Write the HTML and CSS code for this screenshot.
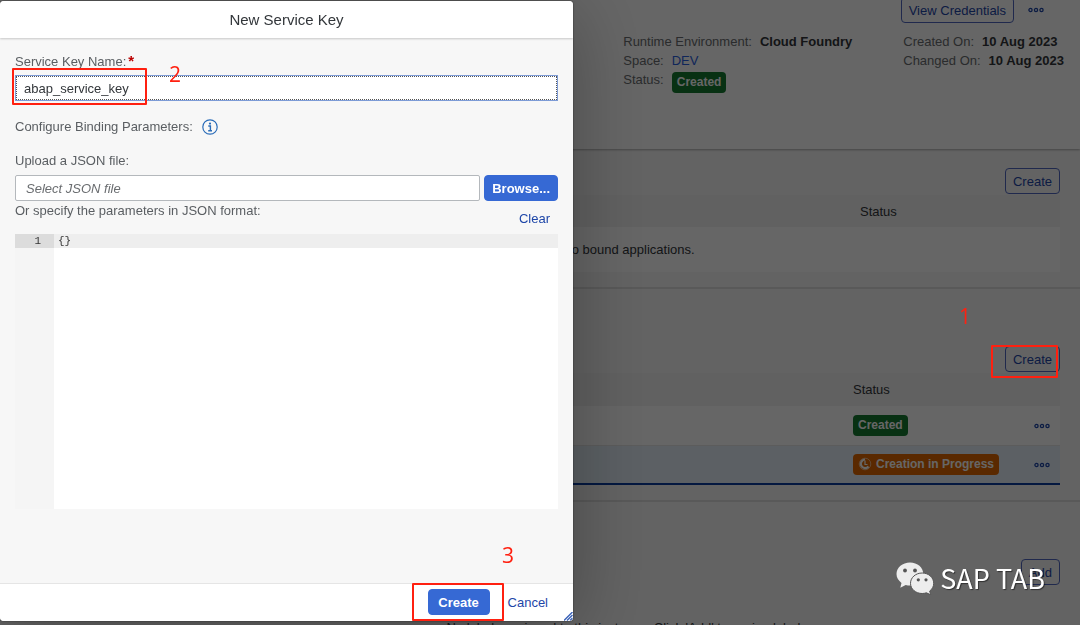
FILE: index.html
```html
<!DOCTYPE html>
<html lang="en">
<head>
  <meta charset="UTF-8" />
  <meta name="viewport" content="width=device-width, initial-scale=1.0"/>
  <title>New Service Key</title>
  <link rel="stylesheet" href="styles.css">
</head>
<body>

  <!-- Instance page -->
  <main class="page">
    <header class="page-header">
      <div class="page-actions">
        <button class="btn">View Credentials</button>
        <button class="more" aria-label="More actions">
          <svg width="16" height="6" viewBox="0 0 16 6"><circle cx="2.5" cy="3" r="1.6"/><circle cx="8" cy="3" r="1.6"/><circle cx="13.5" cy="3" r="1.6"/></svg>
        </button>
      </div>
      <div class="facts">
        <div class="fact-list fact-list-main">
          <div class="fact"><span>Runtime Environment:</span><strong>Cloud Foundry</strong></div>
          <div class="fact"><span>Space:</span><a href="#">DEV</a></div>
          <div class="fact"><span>Status:</span><span class="badge badge-ok">Created</span></div>
        </div>
        <div class="fact-list">
          <div class="fact"><span>Created On:</span><strong>10 Aug 2023</strong></div>
          <div class="fact"><span>Changed On:</span><strong>10 Aug 2023</strong></div>
        </div>
      </div>
    </header>

    <section class="section">
      <div class="toolbar"><button class="btn">Create</button></div>
      <table class="table table-apps">
        <thead>
          <tr><th></th><th class="col-status">Status</th></tr>
        </thead>
        <tbody>
          <tr><td colspan="2" class="empty">No bound applications.</td></tr>
        </tbody>
      </table>
    </section>

    <section class="section">
      <div class="toolbar"><button class="btn">Create</button></div>
      <table class="table table-keys">
        <thead>
          <tr><th></th><th class="col-status">Status</th><th class="col-more"></th></tr>
        </thead>
        <tbody>
          <tr>
            <td></td>
            <td><span class="badge badge-ok">Created</span></td>
            <td>
              <button class="more" aria-label="More actions">
                <svg width="16" height="6" viewBox="0 0 16 6"><circle cx="2.5" cy="3" r="1.6"/><circle cx="8" cy="3" r="1.6"/><circle cx="13.5" cy="3" r="1.6"/></svg>
              </button>
            </td>
          </tr>
          <tr class="selected">
            <td></td>
            <td>
              <span class="badge badge-busy">
                <svg width="14" height="14" viewBox="0 0 14 14"><circle cx="7" cy="7" r="5.8" fill="none" stroke="#fff" stroke-opacity=".5"/><path d="M7 2.500A4.300 4.300 0 1 0 10.500 9.500" fill="none" stroke="#fff" stroke-width="2.200"/><path d="M7 3.500V7.500H9.500" fill="none" stroke="#fff" stroke-width="1.200"/></svg>
                Creation in Progress
              </span>
            </td>
            <td>
              <button class="more" aria-label="More actions">
                <svg width="16" height="6" viewBox="0 0 16 6"><circle cx="2.5" cy="3" r="1.6"/><circle cx="8" cy="3" r="1.6"/><circle cx="13.5" cy="3" r="1.6"/></svg>
              </button>
            </td>
          </tr>
        </tbody>
      </table>
    </section>

    <section class="section section-labels">
      <div class="toolbar"><button class="btn">Add</button></div>
      <p class="empty">No labels assigned to this instance. Click 'Add' to assign labels.</p>
    </section>
  </main>

  <div class="overlay"></div>

  <!-- Dialog -->
  <form class="dialog" role="dialog" aria-labelledby="dialog-title">
    <h1 class="dialog-title" id="dialog-title">New Service Key</h1>

    <div class="dialog-body">
      <label for="key-name">Service Key Name:<span class="required">*</span></label>
      <div class="focus-box">
        <input class="input" id="key-name" type="text" value="abap_service_key">
      </div>

      <div class="binding">
        <span>Configure Binding Parameters:</span>
        <svg width="16" height="16" viewBox="0 0 16 16"><circle cx="8" cy="8" r="7.2" fill="none" stroke="#2a6cb8" stroke-width="1.2"/><circle cx="8" cy="4.6" r="1.1" fill="#2a6cb8"/><path d="M6.3 7H8.4V11.5M6.2 11.7H10" fill="none" stroke="#2a6cb8" stroke-width="1.4"/></svg>
      </div>

      <label for="json-file">Upload a JSON file:</label>
      <div class="upload">
        <input class="input" id="json-file" type="text" placeholder="Select JSON file">
        <button type="button" class="btn btn-primary">Browse...</button>
      </div>

      <div class="params">
        <label for="json-text">Or specify the parameters in JSON format:</label>
        <button type="button" class="btn btn-text">Clear</button>
      </div>
      <div class="editor">
        <div class="gutter"><span>1</span></div>
        <textarea id="json-text" spellcheck="false">{}</textarea>
      </div>
    </div>

    <footer class="dialog-footer">
      <button type="button" class="btn btn-primary">Create</button>
      <button type="button" class="btn btn-text">Cancel</button>
    </footer>
    <svg class="resize" width="9" height="9" viewBox="0 0 9 9"><path d="M0 8.5L8.5 0M3 8.5L8.5 3M6 8.5L8.5 6" stroke="#3a62b8" stroke-width="1.4"/></svg>
  </form>

  <!-- Step marks -->
  <div class="mark mark-name"></div>
  <div class="mark mark-create"></div>
  <div class="mark mark-submit"></div>
  <span class="step step-1">1</span>
  <span class="step step-2">2</span>
  <span class="step step-3">3</span>

  <!-- Watermark -->
  <div class="watermark">
    <svg width="38" height="33" viewBox="0 0 38 33">
      <path d="M14 0.5C6.500 0.500 0.500 5.500 0.500 12C0.500 15.700 2.500 18.700 5.500 20.900L4.300 25.700L9.700 22.900C11.200 23.300 12.600 23.500 14 23.500C21.500 23.500 27.300 18.500 27.300 12S21.500 0.500 14 0.500Z" fill="#ededed"/>
      <path d="M26.200 11C19.700 11 14.500 15.500 14.500 21.300S19.700 31.500 26.200 31.500C27.700 31.500 29.100 31.200 30.400 30.800L34.700 32.800L33.700 29C36.200 27.200 37.700 24.500 37.700 21.300C37.700 15.500 32.600 11 26.200 11Z" fill="#ededed" stroke="#555" stroke-width="1"/>
      <g fill="#555"><circle cx="9" cy="8.500" r="1.900"/><circle cx="19" cy="8.500" r="1.900"/><circle cx="22.300" cy="17.800" r="1.600"/><circle cx="30" cy="17.800" r="1.600"/></g>
    </svg>
    <span>SAP TAB</span>
  </div>

</body>
</html>
```

FILE: styles.css
```css
* {
  margin: 0;
  padding: 0;
  box-sizing: border-box;
}

body {
  font-family: "Liberation Sans", Arial, sans-serif;
  font-size: 13px;
  line-height: 19px;
  color: #32363a;
  background: #f7f7f7;
  height: 100vh;
  overflow: hidden;
}

a {
  color: #2a5fe0;
  text-decoration: none;
}

/* Buttons */
.btn {
  height: 26px;
  padding: 0 7px;
  border: 1px solid #5068c0;
  border-radius: 4px;
  background: transparent;
  color: #1e46a8;
  font: inherit;
  white-space: nowrap;
}

.btn-primary {
  background: #3669d4;
  border-color: #3669d4;
  color: #fff;
  font-weight: bold;
}

.btn-text {
  border-color: transparent;
}

.more {
  display: inline-flex;
  align-items: center;
  border: none;
  background: none;
  vertical-align: middle;
}

.more circle {
  fill: none;
  stroke: #1e46a8;
  stroke-width: 1.3;
}

.badge {
  display: inline-flex;
  align-items: center;
  height: 21px;
  padding: 0 5px;
  border-radius: 4px;
  color: #fff;
  font-size: 12px;
  font-weight: bold;
  white-space: nowrap;
  vertical-align: middle;
}

.badge-ok {
  background: #147a30;
}

.badge-busy {
  gap: 4px;
  background: #e06800;
}

/* Instance page */
.page-header {
  height: 152px;
  padding-right: 16px;
  background: #fff;
  box-shadow: 0 1px 2px rgba(0, 0, 0, 0.3);
}

.page-actions {
  display: flex;
  justify-content: flex-end;
  gap: 14px;
  height: 31px;
  margin-top: -3px;
  padding-right: 20px;
}

.page-actions .more {
  height: 26px;
}

.facts {
  display: flex;
  justify-content: flex-end;
  gap: 48px;
  padding-top: 4px;
}

.fact-list-main {
  min-width: 232px;
}

.fact {
  display: flex;
  gap: 8px;
  color: #6a6d70;
}

.fact strong {
  color: #32363a;
}

.fact .badge {
  margin-top: 2px;
}

.section {
  padding: 19px 20px 15px 197px;
  border-bottom: 2px solid #dedede;
}

.section + .section {
  padding-top: 57px;
}

.section-labels {
  border: none;
}

.toolbar {
  display: flex;
  justify-content: flex-end;
  height: 27px;
}

.table {
  width: 100%;
  border-collapse: collapse;
  table-layout: fixed;
  background: #fff;
}

.table th {
  height: 32px;
  background: #f2f2f2;
  font-weight: normal;
  text-align: left;
}

.table td {
  height: 39px;
  vertical-align: middle;
}

.table-keys th {
  height: 33px;
}

.table-apps td {
  height: 45px;
}

.table-apps .col-status {
  width: 200px;
}

.table-keys .col-status {
  width: 181px;
}

.table-keys .col-more {
  width: 26px;
}

.table-keys tr + tr td {
  border-top: 1px solid #e5e5e5;
}

.table .selected td {
  background: #e5f0fa;
  border-bottom: 2px solid #0a3ca0;
}

.empty {
  text-align: center;
}

.section-labels .empty {
  padding-top: 32px;
}

.overlay {
  position: fixed;
  inset: 0;
  background: rgba(0, 0, 0, 0.6);
}

/* Dialog */
.dialog {
  position: fixed;
  top: 1px;
  bottom: 4px;
  left: 0;
  width: 100%;
  max-width: 573px;
  display: flex;
  flex-direction: column;
  border-radius: 4px;
  background: #f7f7f7;
  box-shadow: 0 0 2px rgba(0, 0, 0, 0.6), 0 10px 80px rgba(0, 0, 0, 0.3);
  overflow: hidden;
}

.dialog-title {
  height: 37px;
  background: #fff;
  box-shadow: 0 1px 2px rgba(0, 0, 0, 0.2);
  font-size: 15px;
  font-weight: normal;
  line-height: 37px;
  text-align: center;
}

.dialog-body {
  flex: 1;
  padding: 14px 15px 0;
  color: #5a5e62;
}

.dialog-body label {
  display: block;
}

.required {
  margin-left: 2px;
  color: #bb0000;
  font-size: 15px;
  font-weight: bold;
  line-height: 15px;
}

.input {
  width: 100%;
  height: 26px;
  padding: 0 10px;
  border: 1px solid #b4b8bc;
  border-radius: 2px;
  background: #fff;
  color: #32363a;
  font: inherit;
}

.input::placeholder {
  color: #6a6d70;
  font-style: italic;
}

.focus-box {
  margin: 4px 0 16px;
  height: 26px;
  border: 1px solid #7d9bd6;
}

.focus-box .input {
  display: block;
  height: 24px;
  padding: 0 7px;
  border: 1px dotted #555;
  border-radius: 0;
  outline: none;
}

.binding {
  display: flex;
  align-items: center;
  gap: 9px;
  margin-bottom: 15px;
}

.upload {
  display: flex;
  gap: 4px;
  margin-top: 5px;
}

.upload .input {
  flex: 1;
}

.params {
  display: flex;
  justify-content: space-between;
  height: 33px;
}

.params .btn {
  margin-top: 4px;
}

.editor {
  display: flex;
  height: 275px;
  background: #fff;
  font-family: "Liberation Mono", monospace;
  font-size: 11px;
  line-height: 14px;
}

.gutter {
  width: 39px;
  background: #f5f5f5;
  color: #333;
}

.gutter span {
  display: block;
  padding-right: 13px;
  background: #dcdcdc;
  text-align: right;
}

.editor textarea {
  flex: 1;
  padding: 0 4px;
  border: none;
  background: linear-gradient(#eee, #eee) 0 0 / 100% 14px no-repeat;
  color: #333;
  font: inherit;
  resize: none;
}

.dialog-footer {
  display: flex;
  justify-content: flex-end;
  gap: 10px;
  height: 38px;
  padding: 5px 17px;
  border-top: 1px solid #e5e5e5;
  background: #fff;
}

.dialog-footer .btn-primary {
  width: 62px;
}

.resize {
  position: absolute;
  right: 0;
  bottom: 0;
}

/* Step marks */
.mark {
  position: fixed;
  border: 2px solid #ff2010;
  border-radius: 1px;
}

.mark-name {
  top: 68px;
  left: 12px;
  width: 135px;
  height: 37px;
}

.mark-create {
  top: 345px;
  right: 22px;
  width: 67px;
  height: 33px;
}

.mark-submit {
  top: 583px;
  left: 412px;
  width: 92px;
  height: 38px;
}

.step {
  position: fixed;
  color: #ff2010;
  font-family: "Open Sans", sans-serif;
  font-size: 21px;
  line-height: 24px;
}

.step-1 {
  top: 304px;
  left: 959px;
}

.step-2 {
  top: 62px;
  left: 169px;
}

.step-3 {
  top: 543px;
  left: 502px;
}

.watermark {
  position: fixed;
  right: 35px;
  bottom: 30px;
  display: flex;
  align-items: center;
  gap: 6px;
  color: #fff;
  font-family: "Noto Sans CJK SC", sans-serif;
  font-size: 27px;
  line-height: 34px;
  text-shadow: 1px 1px 1px rgba(0, 0, 0, 0.5);
}
```
